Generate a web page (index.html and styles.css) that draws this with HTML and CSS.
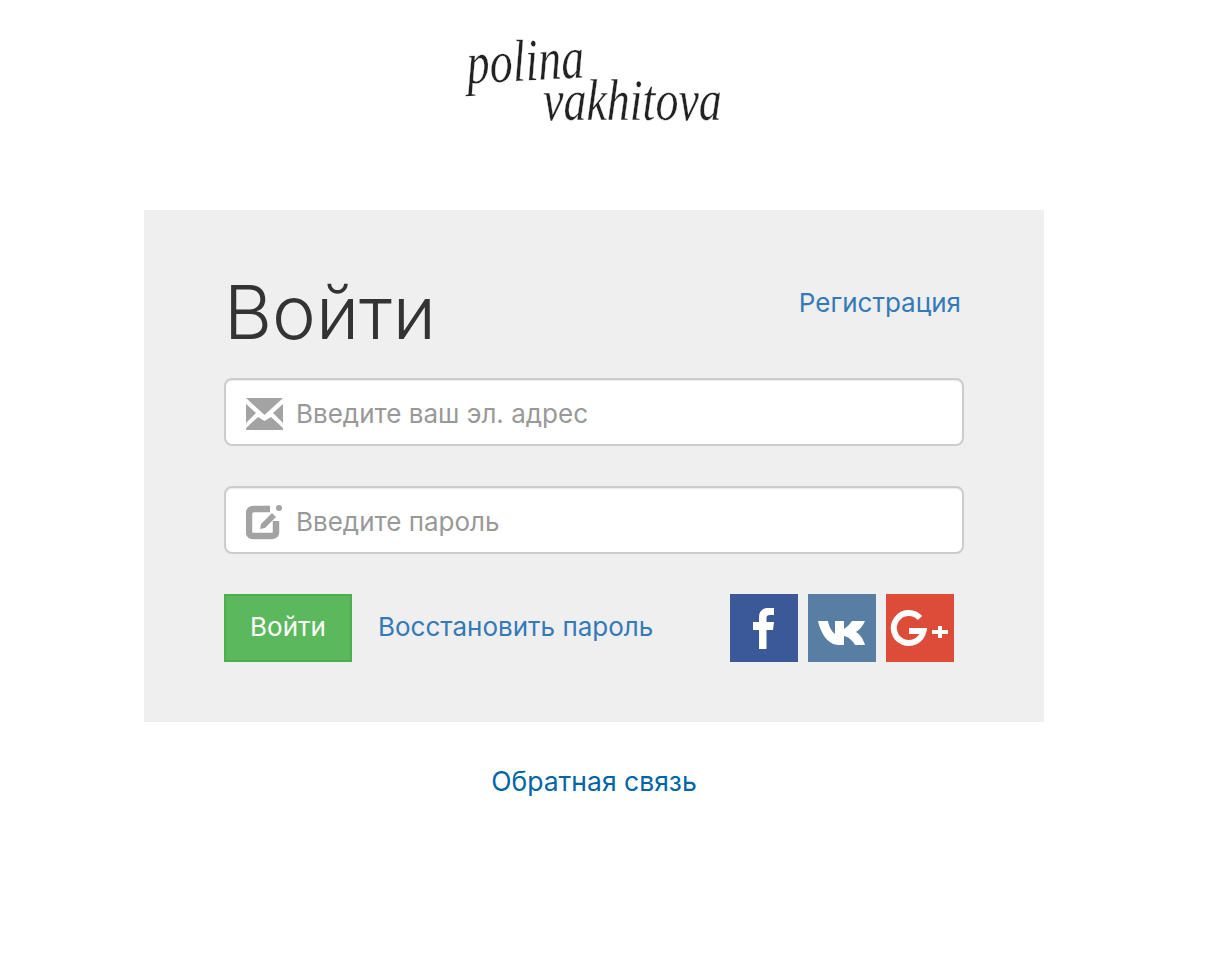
FILE: index.html
```html
<!DOCTYPE html>
<html lang="ru">
    <head>
        <meta charset="UTF-8" />
        <meta name="viewport" content="width=device-width, initial-scale=1.0" />
        <title>Войти</title>

        <link rel="stylesheet" href="styles.css">
    </head>
    <body>
        <div class="page">
            <div class="logo">
                <span class="logo-first">polina</span>
                <span class="logo-last">vakhitova</span>
            </div>

            <div class="card">
                <div class="card-head">
                    <h1>Войти</h1>
                    <a class="link" href="#">Регистрация</a>
                </div>

                <div class="field">
                    <svg class="field-icon" width="38" height="38" viewBox="0 0 38 38">
                        <path fill="#a3a3a3" d="M0 1H37L18.500 18Z" />
                        <path fill="#a3a3a3" d="M0 7V26L10 16Z" />
                        <path fill="#a3a3a3" d="M37 7V26L27 16Z" />
                        <path fill="#a3a3a3" d="M0 33V31L12 20L18.500 24L25 20L37 31V33Z" />
                    </svg>
                    <input type="text" placeholder="Введите ваш эл. адрес" />
                </div>

                <div class="field">
                    <svg class="field-icon" width="38" height="38" viewBox="0 0 38 38">
                        <path fill="none" stroke="#a3a3a3" stroke-width="6.500" d="M24 4H8Q3 4 3 9V27Q3 31 8 31H25Q30 31 30 27V16" />
                        <path fill="#a3a3a3" d="M15 19L26 8L30 12L19 23L14 24Z" />
                        <circle fill="#a3a3a3" cx="33" cy="3" r="3" />
                    </svg>
                    <input type="password" placeholder="Введите пароль" />
                </div>

                <div class="actions">
                    <button class="submit">Войти</button>
                    <a class="link restore" href="#">Восстановить пароль</a>
                    <div class="socials">
                        <a class="social fb" href="#">
                            <svg width="68" height="68" viewBox="0 0 68 68">
                                <path fill="#fff" d="M29 55V36H23V28H29V23C29 17 33 14 38 14H44V21H40C37.500 21 36.500 22 36.500 24V28H44L43 36H36.500V55Z" />
                            </svg>
                        </a>
                        <a class="social vk" href="#">
                            <svg width="68" height="68" viewBox="0 0 68 68">
                                <path fill="#fff" d="M10 27H20C21 33 24 38 27 40V27H36V35C39 33 42 30 44 27H57C55 32 51 36 48 38C52 40 55 45 57 51H47C45 47 41 43 36 42V51H31C20 51 13 40 10 27Z" />
                            </svg>
                        </a>
                        <a class="social gplus" href="#">
                            <svg width="68" height="68" viewBox="0 0 68 68">
                                <path fill="none" stroke="#fff" stroke-width="6" d="M34 24A15 15 0 1 0 37.500 37H23" />
                                <path fill="#fff" d="M52 32H56V36H62V40H56V44H52V40H46V36H52Z" />
                            </svg>
                        </a>
                    </div>
                </div>
            </div>

            <a class="feedback" href="#">Обратная связь</a>
        </div>
    </body>
</html>
```

FILE: styles.css
```css
body {
    font-family: Inter, Arial, sans-serif;
    background-color: #fff;
    margin: 0;
}

.page {
    width: 1188px;
    display: flex;
    flex-direction: column;
    align-items: center;
}

.logo {
    width: 252px;
    height: 210px;
    padding-top: 48px;
    box-sizing: border-box;
    font-family: "Liberation Serif", serif;
    font-style: italic;
    font-size: 46px;
    color: #222;
    display: flex;
    flex-direction: column;
    -webkit-text-stroke: 0.3px #fff;
    filter: blur(0.3px);
}

.logo-first {
    line-height: 46px;
    transform: rotate(-3deg) scaleY(1.3);
    transform-origin: left bottom;
}

.logo-last {
    line-height: 44px;
    margin-top: -9px;
    margin-left: 75px;
    white-space: nowrap;
    transform: scaleY(1.3);
    transform-origin: left bottom;
}

.card {
    width: 900px;
    height: 512px;
    box-sizing: border-box;
    padding: 60px 80px;
    background-color: #efefef;
}

.card-head {
    display: flex;
    justify-content: space-between;
    height: 108px;
}

h1 {
    margin: 0;
    font-size: 74px;
    font-weight: 300;
    line-height: 84px;
    color: #333;
}

.link {
    color: #337ab7;
    font-size: 26px;
    text-decoration: none;
}

.card-head .link {
    margin-right: 3px;
    line-height: 66px;
}

.field {
    display: flex;
    align-items: center;
    width: 740px;
    height: 68px;
    box-sizing: border-box;
    margin-bottom: 40px;
    padding-left: 20px;
    background-color: #fff;
    border: 2px solid #ccc;
    border-radius: 8px;
    box-shadow: inset 0 1px 1px rgba(0, 0, 0, 0.08);
}

.field-icon {
    flex: none;
    margin-top: 8px;
}

.field input {
    flex: 1;
    min-width: 0;
    margin-left: 12px;
    padding: 2px 0 0;
    border: 0;
    outline: 0;
    background: none;
    font-family: inherit;
    font-size: 26px;
}

.field input::placeholder {
    color: #999;
    opacity: 1;
}

.actions {
    display: flex;
    align-items: center;
    height: 68px;
}

.submit {
    width: 128px;
    height: 68px;
    padding: 0 0 4px;
    background-color: #5cb85c;
    border: 2px solid #4cae4c;
    color: #fff;
    font-family: inherit;
    font-size: 26px;
}

.restore {
    margin-left: 26px;
    margin-bottom: 4px;
}

.socials {
    display: flex;
    gap: 10px;
    margin-left: auto;
    margin-right: 10px;
}

.social {
    display: block;
    width: 68px;
    height: 68px;
}

.social svg {
    display: block;
}

.fb {
    background-color: #3b5998;
}

.vk {
    background-color: #587ea3;
}

.gplus {
    background-color: #dd4b39;
}

.feedback {
    margin-top: 43px;
    color: #0065a6;
    font-size: 26.500px;
    text-decoration: none;
}
```
